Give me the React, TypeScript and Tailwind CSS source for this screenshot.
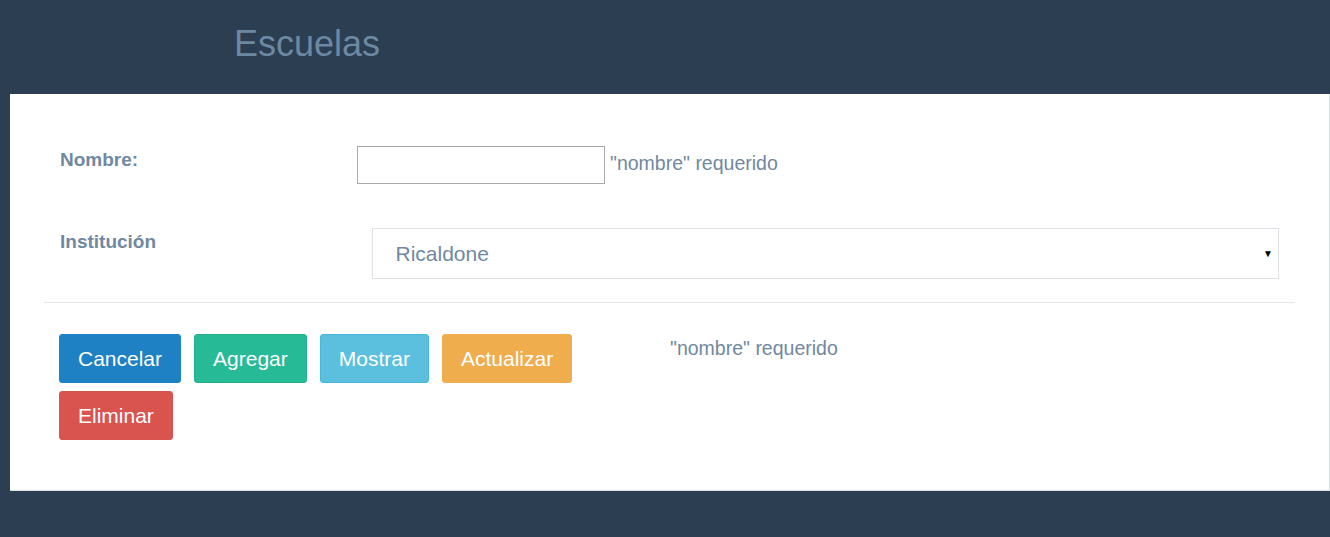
export default function App() {
  return (
    <main className="min-h-[537px] bg-[#2c3e52] font-['Liberation_Sans',Arial,sans-serif]">
      <header className="h-[94px] pl-[234px] pt-[22px]">
        <h1 className="text-[36px] leading-[44px] text-[#6d88a3]">Escuelas</h1>
      </header>

      <section className="ml-[10px] h-[397px] border-r border-b border-[#d8dde2] bg-white px-[34px] pt-[52px]">
        <div className="flex items-start px-[16px]">
          <label className="w-[297px] pt-[2px] text-[19px] font-bold leading-[24px] text-[#7088a1]">Nombre:</label>
          <input
            type="text"
            className="h-[38px] w-[248px] border border-[#a9a9a9] bg-white outline-none"
          />
          <span className="ml-[5px] pt-[5px] text-[19.5px] leading-[24px] text-[#7088a1]">"nombre" requerido</span>
        </div>

        <div className="mt-[44px] flex items-start px-[16px]">
          <label className="w-[313px] pt-[2px] text-[19px] font-bold leading-[24px] text-[#7088a1]">Institución</label>
          <div className="flex h-[51px] w-[908px] items-center justify-between border border-[#dde1e6] bg-white pl-[22px] pr-[5px]">
            <span className="text-[21px] text-[#7088a1]">Ricaldone</span>
            <span className="text-[10px] text-black">▼</span>
          </div>
        </div>

        <hr className="mt-[23px] border-t border-[#e6e6e6]" />

        <div className="mt-[31px] flex items-start px-[15px]">
          <div className="flex w-[611px] flex-wrap gap-x-[13px] gap-y-[8px]">
            <Btn className="bg-[#1d81c4] border-[#1d81c4]">Cancelar</Btn>
            <Btn className="bg-[#26ba96] border-[#24b08e]">Agregar</Btn>
            <Btn className="bg-[#5bc0de] border-[#46b8da]">Mostrar</Btn>
            <Btn className="bg-[#f0ad4e] border-[#f0ad4e]">Actualizar</Btn>
            <Btn className="bg-[#d9534f] border-[#d9534f]">Eliminar</Btn>
          </div>
          <span className="pt-[2px] text-[19.5px] leading-[24px] text-[#7088a1]">"nombre" requerido</span>
        </div>
      </section>
    </main>
  );
}

type BtnProps = {
  className: string;
  children: React.ReactNode;
};

function Btn({ className, children }: BtnProps) {
  return (
    <button
      className={`h-[49px] rounded-[3px] border px-[18px] text-[21px] leading-[27px] text-white ${className}`}
    >
      {children}
    </button>
  );
}
